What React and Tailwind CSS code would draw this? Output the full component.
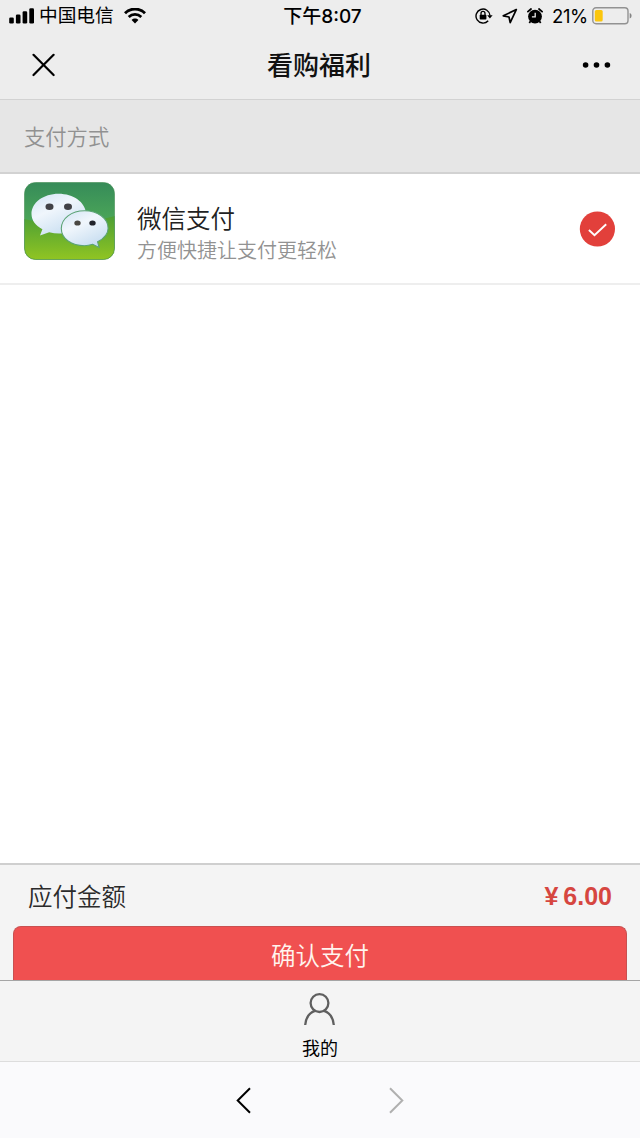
const SignalIcon = () => (
  <svg className="ml-[9px] shrink-0" width="26" height="16" viewBox="0 0 26 16">
    <rect x="0.2" y="9.5" width="4.6" height="6" rx="1.3" />
    <rect x="6.9" y="6.5" width="4.6" height="9" rx="1.3" />
    <rect x="13.6" y="3.3" width="4.6" height="12.2" rx="1.3" />
    <rect x="20.3" y="0.2" width="4.7" height="15.3" rx="1.3" />
  </svg>
);

const WifiIcon = () => (
  <svg className="ml-[10px] shrink-0" width="22" height="16" viewBox="0 0 22 16" fill="none" stroke="#000">
    <path d="M1 5.2C6.5-.3 15.5-.3 21 5.2" strokeWidth="2.9" />
    <path d="M4.7 9C8.3 5.5 13.7 5.5 17.3 9" strokeWidth="2.7" />
    <path d="M7.6 11.9C9.5 10.1 12.5 10.1 14.4 11.9L11 15.4Z" fill="#000" stroke="none" />
  </svg>
);

const LockRotationIcon = () => (
  <svg width="18" height="16" viewBox="0 0 18 16" fill="none" stroke="#000">
    <path d="M13.2 12.8A7 7 0 1 1 15 7.5" strokeWidth="1.4" />
    <path d="M12.2 7.3H17.6L14.9 10.5Z" fill="#000" stroke="none" />
    <rect x="4.7" y="6.7" width="6.7" height="4.9" rx="0.8" fill="#000" stroke="none" />
    <path d="M6 7V5.4a2 2 0 0 1 4 0V7" strokeWidth="1.3" />
  </svg>
);

const LocationIcon = () => (
  <svg width="16" height="16" viewBox="0 0 16 16" fill="none" stroke="#000" strokeWidth="1.7" strokeLinejoin="round">
    <path d="M14.3 1.6L1.3 7.8L7 9L8.2 14.6Z" />
  </svg>
);

const AlarmIcon = () => (
  <svg width="16" height="16" viewBox="0 0 16 16" fill="none">
    <circle cx="8" cy="8.6" r="6.9" fill="#000" />
    <path d="M.9 3.6L4 1M15.1 3.6L12 1" stroke="#000" strokeWidth="1.8" strokeLinecap="round" />
    <path d="M3.5 13.2L2.3 15M12.5 13.2L13.7 15" stroke="#000" strokeWidth="1.7" />
    <path d="M8.2 4.7V8.9H4.9" stroke="#ededed" strokeWidth="1.3" />
  </svg>
);

const BatteryIcon = () => (
  <svg width="41" height="18" viewBox="0 0 41 18">
    <rect x="0.8" y="0.8" width="35.2" height="15.9" rx="3.2" fill="none" stroke="#929292" strokeWidth="1.4" />
    <rect x="2.8" y="2.9" width="7.9" height="11.7" rx="1.5" fill="#fbc60d" />
    <path d="M37.7 6C40.2 6.8 40.2 10.7 37.7 11.5Z" fill="#858585" />
  </svg>
);

const WechatLogo = () => (
  <svg className="shrink-0" width="91" height="78" viewBox="0 0 91 78">
    <defs>
      <linearGradient id="top" x1="0" y1="0" x2="0" y2="1">
        <stop offset="0" stopColor="#368b59" />
        <stop offset="0.5" stopColor="#4ba658" />
      </linearGradient>
      <linearGradient id="bottom" x1="0" y1="0" x2="0" y2="1">
        <stop offset="0" stopColor="#4c9f35" />
        <stop offset="1" stopColor="#91c522" />
      </linearGradient>
      <linearGradient id="bubble" x1="0.1" y1="0" x2="0.7" y2="1">
        <stop offset="0" stopColor="#d5e6f5" />
        <stop offset="0.4" stopColor="#f0f6fc" />
        <stop offset="1" stopColor="#c5dcf0" />
      </linearGradient>
      <clipPath id="tile">
        <rect x="0.5" y="0.5" width="90" height="77" rx="11" />
      </clipPath>
    </defs>
    <g clipPath="url(#tile)">
      <rect width="91" height="78" fill="url(#top)" />
      <path d="M0 37Q45 47 91 34V78H0Z" fill="url(#bottom)" />
    </g>
    <path
      d="M34.5 11.7C19.5 11.7 7.5 20.5 7.5 32C7.5 38.5 11.6 43.6 18.4 47.3L16 53.5L25.2 50.2C42 55 62 47 62 31C61 20 49.5 11.7 34.5 11.7Z"
      fill="url(#bubble)"
    />
    <path
      d="M60.5 28.8C47.5 28.8 37.3 36.3 37.3 46.6C37.3 57 47.7 63.7 60.5 63.7C63.5 63.7 66.2 63.1 68.8 62.3L75.1 65.5L73.6 59.8C79.8 56.6 84.1 51.8 84.1 46.2C84.1 36.3 73.5 28.8 60.5 28.8Z"
      fill="url(#bubble)"
      stroke="#5ba374"
      strokeWidth="1.1"
    />
    <ellipse cx="25.5" cy="24.7" rx="4" ry="3.2" fill="#424246" />
    <ellipse cx="44" cy="24.7" rx="4" ry="3.2" fill="#424246" />
    <ellipse cx="53.5" cy="41" rx="3.2" ry="2.6" fill="#4b4843" />
    <ellipse cx="68.5" cy="41" rx="3.2" ry="2.6" fill="#20222a" />
    <rect x="0.5" y="0.5" width="90" height="77" rx="11" fill="none" stroke="#428c51" strokeOpacity="0.6" />
  </svg>
);

const StatusBar = () => (
  <div className="grid h-8 grid-cols-3 items-center text-black">
    <div className="flex items-center">
      <SignalIcon />
      <span className="ml-1 text-[18.7px] leading-8 whitespace-nowrap">中国电信</span>
      <WifiIcon />
    </div>
    <div className="pt-[2px] pl-[5px] text-center text-[19px] leading-[30px] font-medium whitespace-nowrap">下午8:07</div>
    <div className="flex items-center justify-end pr-[7px]">
      <LockRotationIcon />
      <span className="ml-[9px] flex"><LocationIcon /></span>
      <span className="ml-[9px] flex"><AlarmIcon /></span>
      <span className="ml-[9px] text-[18.5px] leading-8 tracking-[-0.3px]">21%</span>
      <span className="ml-1 flex"><BatteryIcon /></span>
    </div>
  </div>
);

const NavBar = () => (
  <div className="flex h-[67px] items-center justify-between pr-7 pb-[2px] pl-8">
    <svg width="24" height="24" viewBox="0 0 24 24" fill="none" stroke="#000" strokeWidth="2.2" strokeLinecap="round">
      <path d="M1.5 1.8L21.6 22M21.6 1.8L1.5 22" />
    </svg>
    <h1 className="pt-[3px] text-[26px] leading-9 font-medium text-[#111]">看购福利</h1>
    <svg width="30" height="8" viewBox="0 0 30 8">
      <circle cx="3.6" cy="4" r="2.8" />
      <circle cx="14.5" cy="4" r="2.8" />
      <circle cx="25.4" cy="4" r="2.8" />
    </svg>
  </div>
);

const PaymentMethod = () => (
  <div className="flex h-[111px] border-b-2 border-[#eee] pt-2 pr-[25px] pl-6">
    <WechatLogo />
    <div className="ml-[22px] flex-1 pt-[19px]">
      <div className="text-[24.5px] leading-[37px] font-[350] text-[#222]">微信支付</div>
      <div className="text-[20px] leading-[26px] font-[350] text-[#929292]">方便快捷让支付更轻松</div>
    </div>
    <svg className="mt-[29px]" width="36" height="36" viewBox="0 0 36 36">
      <circle cx="18.4" cy="18" r="17.6" fill="#e2403b" />
      <path d="M9.9 19L15.5 24.2L27.2 13.3" fill="none" stroke="#fff" strokeWidth="1.9" />
    </svg>
  </div>
);

const PayFooter = () => (
  <div className="h-[117px] border-t-2 border-[#cfcfcf] bg-[#f4f4f4] px-[13px]">
    <div className="flex h-[61px] items-center justify-between px-[15px] pt-[2px]">
      <span className="pt-[2px] text-[24.5px] font-[350] text-[#2b2b2b]">应付金额</span>
      <span className="flex gap-[5px] font-['Liberation_Sans',sans-serif] text-[25px] font-bold text-[#d64640]">
        <span>¥</span>
        <span>6.00</span>
      </span>
    </div>
    <button className="block h-[54px] w-full rounded-t-[8px] border border-b-0 border-[#c95050] bg-[#f05050] pt-[5px] text-[24.5px] font-[350] text-[#fff4ee]">
      确认支付
    </button>
  </div>
);

const TabBar = () => (
  <div className="flex h-[81px] flex-col items-center border-t border-[#a5a5a5] bg-[#f4f4f4] pt-3">
    <svg className="shrink-0" width="32" height="33" viewBox="0 0 32 33" fill="none" stroke="#5f5f5f" strokeWidth="2.3">
      <circle cx="15.5" cy="10.1" r="8.9" />
      <path d="M1.2 32C1.8 24.7 5.7 19.7 11 17.9M20 17.9C25.3 19.7 29.2 24.7 29.8 32" />
    </svg>
    <span className="mt-[11px] text-[18px] leading-6 text-black">我的</span>
  </div>
);

const BrowserBar = () => (
  <div className="flex h-[77px] items-center justify-center gap-[136px] border-t border-[#ddd] bg-[#fafafc]">
    <svg width="17" height="27" viewBox="0 0 17 27" fill="none" stroke="#000" strokeWidth="2">
      <path d="M15 1.2L2.7 13.5L15 25.8" />
    </svg>
    <svg width="17" height="27" viewBox="0 0 17 27" fill="none" stroke="#b0b0b0" strokeWidth="2">
      <path d="M2 1.2L14.3 13.5L2 25.8" />
    </svg>
  </div>
);

const App = () => {
  return (
    <div className="flex h-[1138px] w-[640px] flex-col overflow-hidden bg-white font-['Inter','Noto_Sans_CJK_SC',sans-serif]">
      {/* Header */}
      <header className="h-[100px] border-b border-[#d2d2d2] bg-[#ededed]">
        <StatusBar />
        <NavBar />
      </header>

      {/* Payment options */}
      <main className="flex-1">
        <h2 className="h-[74px] border-b-2 border-[#d2d2d2] bg-[#e6e6e6] pl-6 text-[21.3px] leading-[74px] font-[350] text-[#919191]">
          支付方式
        </h2>
        <PaymentMethod />
      </main>

      {/* Bottom bars */}
      <PayFooter />
      <TabBar />
      <BrowserBar />
    </div>
  );
};

export default App;
